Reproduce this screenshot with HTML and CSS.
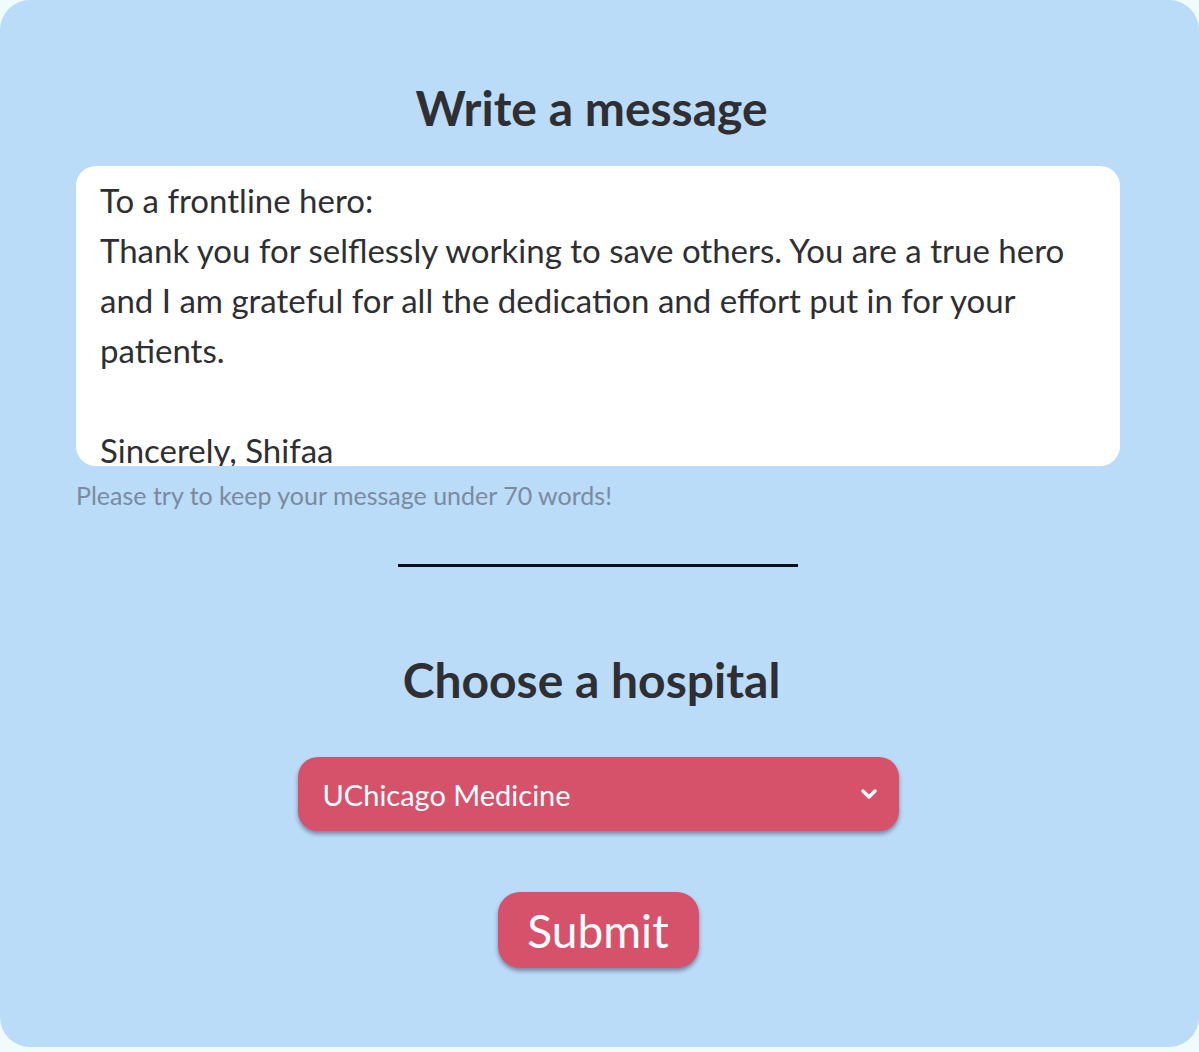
FILE: index.html
```html
<!DOCTYPE html>
<html lang="en">
<head>
    <meta charset="UTF-8">
    <meta name="viewport" content="width=device-width, initial-scale=1.0">
    <title>Write a message</title>
    <link rel="stylesheet" href="styles.css">
</head>
<body>
    <div class="karta">
        <h1 class="tytul">Write a message</h1>
        <textarea class="wiadomosc" spellcheck="false">To a frontline hero:
Thank you for selflessly working to save others. You are a true hero
and I am grateful for all the dedication and effort put in for your
patients.

Sincerely, Shifaa</textarea>
        <p class="podpowiedz">Please try to keep your message under 70 words!</p>
        <div class="kreska"></div>
        <h1 class="tytul tytul2">Choose a hospital</h1>
        <div class="wybor">
            <span>UChicago Medicine</span>
            <svg class="strzalka" width="18" height="14" viewBox="0 0 18 14">
                <path d="M3 4 L9 10 L15 4" fill="none" stroke="#fff" stroke-width="3.4" stroke-linecap="round" stroke-linejoin="round"/>
            </svg>
        </div>
        <button class="wyslij">Submit</button>
    </div>
</body>
</html>
```

FILE: styles.css
```css
html, body {
    margin: 0;
    padding: 0;
    background-color: #f0fbfd;
}
.karta {
    width: 1199px;
    height: 1047px;
    box-sizing: border-box;
    padding: 78px 79px 0 76px;
    background-color: #badcf8;
    border-radius: 30px;
    display: flex;
    flex-direction: column;
    align-items: center;
    font-family: Lato, "Noto Sans", sans-serif;
}
.tytul {
    margin: 0;
    padding-right: 13px;
    font-size: 48px;
    line-height: 60px;
    font-weight: 700;
    color: #2f2f33;
}
.tytul2 {
    margin-top: 83px;
}
.wiadomosc {
    align-self: flex-start;
    margin-top: 28px;
    width: 1044px;
    height: 300px;
    box-sizing: border-box;
    padding: 9px 24px;
    border: none;
    border-radius: 20px;
    background-color: #fff;
    font-family: Lato, "Noto Sans", sans-serif;
    font-size: 33px;
    line-height: 50px;
    color: #2f2f33;
    white-space: pre;
    overflow: hidden;
    resize: none;
    outline: none;
}
.podpowiedz {
    align-self: flex-start;
    margin: 14px 0 0 0;
    font-size: 25px;
    line-height: 30px;
    color: #7b8aa0;
}
.kreska {
    margin-top: 54px;
    width: 400px;
    height: 3px;
    background-color: #0b0f1c;
}
.wybor {
    margin-top: 47px;
    width: 601px;
    height: 74px;
    box-sizing: border-box;
    padding: 0 21px 0 25px;
    border-radius: 20px;
    background-color: #d6526a;
    box-shadow: 0 3px 4px rgba(40, 30, 60, 0.45);
    display: flex;
    align-items: center;
    justify-content: space-between;
    color: #fff;
    font-size: 29px;
}
.wyslij {
    margin-top: 61px;
    width: 201px;
    height: 76px;
    border: none;
    border-radius: 22px;
    background-color: #d6526a;
    box-shadow: 0 3px 4px rgba(40, 30, 60, 0.45);
    color: #fff;
    font-family: Lato, "Noto Sans", sans-serif;
    font-size: 46px;
    padding: 0;
}
```
